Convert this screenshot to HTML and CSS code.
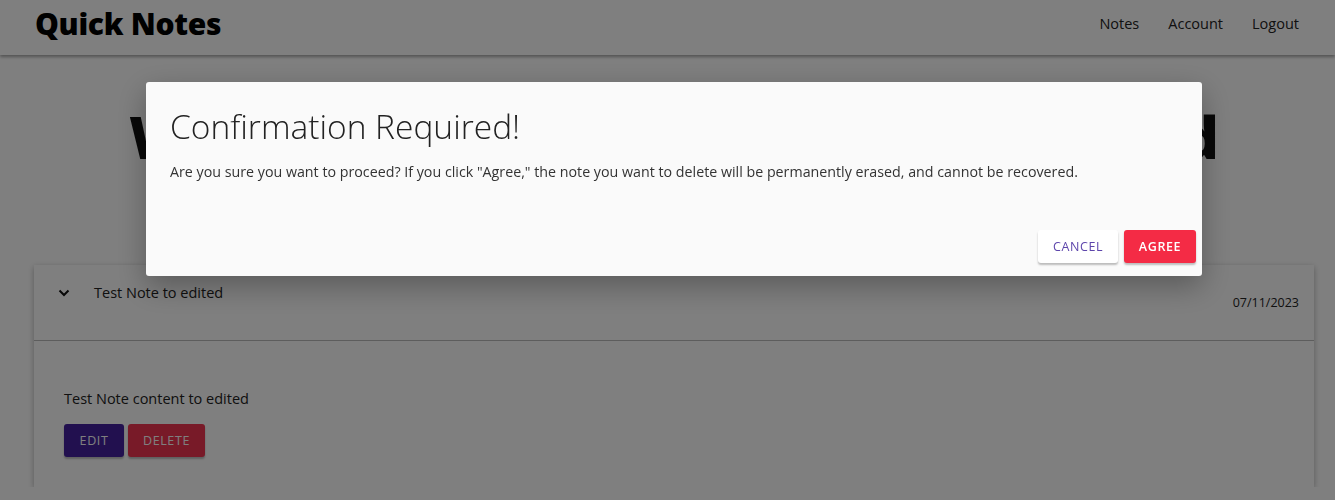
FILE: index.html
```html
<!DOCTYPE html>
<html lang="en">
<head>
<meta charset="utf-8">
<title>Quick Notes</title>
<link rel="stylesheet" href="styles.css">
</head>
<body>
<header class="topbar">
  <div class="brand">Quick Notes</div>
  <nav class="nav">
    <a class="nav-link">Notes</a>
    <a class="nav-link">Account</a>
    <a class="nav-link">Logout</a>
  </nav>
</header>
<main class="page">
  <h1 class="hero">Welcome to your Quick Notes board</h1>
  <section class="card">
    <div class="card-head">
      <div class="card-title-row">
        <svg class="chev" width="12" height="8" viewBox="0 0 12 8"><path d="M1.5 1.5 L6 6 L10.5 1.5" fill="none" stroke="#111" stroke-width="2"/></svg>
        <span class="card-title">Test Note to edited</span>
      </div>
      <span class="card-date">07/11/2023</span>
    </div>
    <div class="card-body">
      <p class="card-text">Test Note content to edited</p>
      <div class="card-actions">
        <button class="btn btn-edit">EDIT</button>
        <button class="btn btn-delete">DELETE</button>
      </div>
    </div>
  </section>
</main>
<div class="backdrop"></div>
<div class="dialog">
  <h2 class="dialog-title">Confirmation Required!</h2>
  <p class="dialog-text">Are you sure you want to proceed? If you click "Agree," the note you want to delete will be permanently erased, and cannot be recovered.</p>
  <div class="dialog-actions">
    <button class="btn btn-cancel">CANCEL</button>
    <button class="btn btn-agree">AGREE</button>
  </div>
</div>
</body>
</html>
```
FILE: styles.css
```css
* { box-sizing: border-box; }
body {
  margin: 0;
  font-family: "Open Sans", "Noto Sans", sans-serif;
  background: #fff;
  color: #222;
}
.topbar {
  height: 55px;
  display: flex;
  align-items: center;
  justify-content: space-between;
  padding: 0 36px 9px 35px;
  background: #fff;
  box-shadow: 0 2px 3px rgba(0,0,0,0.35);
  position: relative;
  z-index: 1;
}
.brand {
  font-size: 30px;
  font-weight: 800;
  color: #000;
  letter-spacing: -0.3px;
}
.nav { display: flex; gap: 29px; }
.nav-link {
  font-size: 14.5px;
  color: #222;
}
.page {
  padding: 0 21px 0 34px;
}
.hero {
  margin: 0;
  padding-top: 41px;
  height: 210px;
  text-align: center;
  font-size: 58.5px;
  font-weight: 800;
  color: #111;
  white-space: nowrap;
}
.card {
  background: #fff;
  box-shadow: 0 2px 6px rgba(0,0,0,0.3);
}
.card-head {
  height: 76px;
  display: flex;
  justify-content: space-between;
  align-items: center;
  padding: 0 15px 0 24px;
  border-bottom: 1px solid #bbb;
}
.card-title-row {
  align-self: flex-start;
  margin-top: 18px;
  display: flex;
  align-items: center;
  gap: 24px;
}
.chev { display: block; }
.card-title { font-size: 14.5px; color: #222; }
.card-date { font-size: 12.5px; color: #222; }
.card-body {
  padding: 48px 30px 30px;
}
.card-text {
  margin: 0 0 16px;
  font-size: 14.5px;
  color: #222;
}
.card-actions { display: flex; gap: 4px; }
.btn {
  border: 0;
  border-radius: 3px;
  height: 33px;
  font-family: inherit;
  font-size: 12.5px;
  letter-spacing: 0.6px;
  cursor: pointer;
  box-shadow: 0 2px 2px rgba(0,0,0,0.25);
}
.btn-edit { background: #44209e; color: #fff; width: 60px; }
.btn-delete { background: #f03450; color: #fff; width: 77px; }
.backdrop {
  position: fixed;
  inset: 0;
  background: rgba(0,0,0,0.5);
  z-index: 5;
}
.dialog {
  position: fixed;
  left: 146px;
  top: 82px;
  width: 1056px;
  height: 194px;
  background: #fafafa;
  z-index: 6;
  border-radius: 3px;
  box-shadow: 0 10px 30px rgba(0,0,0,0.3);
  padding: 23px 6px 13px 24px;
  display: flex;
  flex-direction: column;
}
.dialog-title {
  margin: 0;
  font-size: 33.5px;
  font-weight: 300;
  line-height: 42px;
  color: #222;
}
.dialog-text {
  margin: 15px 0 0;
  font-size: 14.25px;
  color: #333;
}
.dialog-actions {
  margin-top: auto;
  display: flex;
  justify-content: flex-end;
  gap: 6px;
}
.btn-cancel { background: #fff; color: #5d45ab; width: 80px; }
.btn-agree { background: #f42b45; color: #fff; width: 72px; font-weight: 600; }
```
